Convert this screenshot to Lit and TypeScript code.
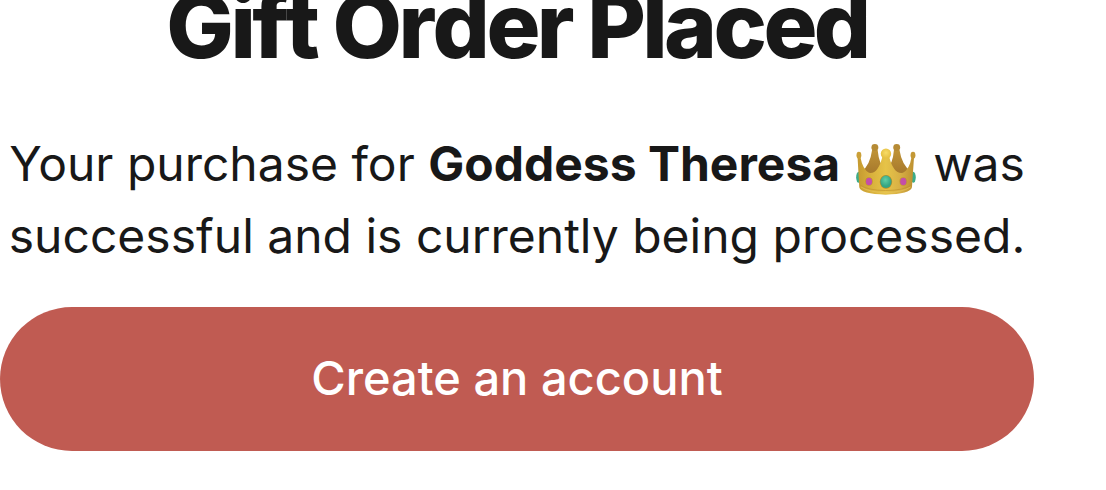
import { LitElement, html, css } from "lit";
import { customElement } from "lit/decorators.js";

@customElement("app-root")
export class AppRoot extends LitElement {
  static styles = css`
    :host { display: block; font-family: Inter, sans-serif; color: #181818; background: #fff; }
    .page { display: flex; flex-direction: column; margin-right: 72px; text-align: center; overflow: hidden; }
    h1 { margin: -26px 0 0; font-size: 90px; line-height: 104px; font-weight: 800; letter-spacing: -0.04em; font-kerning: none; }
    p { margin: 50px 0 0; font-size: 48px; line-height: 72px; }
    .crown { width: 66px; height: 52px; vertical-align: -14px; }
    button { margin: 35px 0 0; padding: 35px 36px 37px; border: 0; border-radius: 72px; background: #c05b52; color: #fff; font: 500 47px/72px Inter, sans-serif; }
  `;
  render() {
    return html`<main class="page">
      <h1>Gift Order Placed</h1>
      <p>Your purchase for <strong>Goddess Theresa</strong> <svg class="crown" viewBox="40 42 190 150" role="img" aria-label="crown">
        <defs>
          <linearGradient id="gold" x1="0" x2="1" y1="0" y2="0">
            <stop offset="0" stop-color="#c59a30"/><stop offset=".25" stop-color="#d9b13c"/>
            <stop offset=".5" stop-color="#e6c348"/><stop offset=".75" stop-color="#d8b045"/><stop offset="1" stop-color="#bd9030"/>
          </linearGradient>
          <linearGradient id="back" x1="0" x2="0" y1="0" y2="1">
            <stop offset="0" stop-color="#c09437"/><stop offset="1" stop-color="#9b6c28"/>
          </linearGradient>
          <radialGradient id="green" cx=".45" cy=".35"><stop offset="0" stop-color="#62cfa6"/><stop offset="1" stop-color="#35a583"/></radialGradient>
          <radialGradient id="ball" cx=".5" cy=".4"><stop offset="0" stop-color="#f8dc67"/><stop offset="1" stop-color="#e6c144"/></radialGradient>
        </defs>
        <path d="M62 124 Q86 106 92 62 H108 Q112 104 131 122 Q152 104 155 62 H171 Q178 106 204 124 V160 H62Z" fill="url(#back)"/>
        <circle cx="100" cy="55" r="10" fill="#b68b35"/><circle cx="163" cy="55" r="10" fill="#b68b35"/>
        <ellipse cx="53" cy="141" rx="7" ry="16" fill="#3cac89"/><ellipse cx="211" cy="141" rx="7" ry="16" fill="#3cac89"/>
        <path d="M50 82 H58 Q65 119 83 128 Q109 133 122 80 H141 Q154 133 181 128 Q200 119 206 82 H213 L207 170 Q202 190 131 191 Q60 190 55 170Z" fill="url(#gold)"/>
        <ellipse cx="54" cy="77" rx="7" ry="10" fill="#cba038"/><ellipse cx="210" cy="77" rx="7" ry="10" fill="#c39836"/>
        <circle cx="132" cy="73" r="15" fill="url(#ball)"/>
        <path d="M57 163 Q80 179 131 179 Q184 179 206 163" fill="none" stroke="#c0922f" stroke-width="2"/>
        <path d="M60 169 Q86 185 131 185 Q178 185 203 169" fill="none" stroke="#e6c35a" stroke-width="2"/>
        <ellipse cx="132" cy="154" rx="18" ry="20" fill="#b48b29"/><ellipse cx="132" cy="154" rx="16" ry="18" fill="url(#green)"/>
        <ellipse cx="83" cy="153" rx="11" ry="12" fill="#c49a2d"/><ellipse cx="83" cy="153" rx="9" ry="11" fill="#c44ea8"/>
        <ellipse cx="182" cy="153" rx="11" ry="12" fill="#c49a2d"/><ellipse cx="182" cy="153" rx="9" ry="11" fill="#c44ea8"/>
      </svg> was successful and is currently being processed.</p>
      <button type="button">Create an account</button>
    </main>`;
  }
}
